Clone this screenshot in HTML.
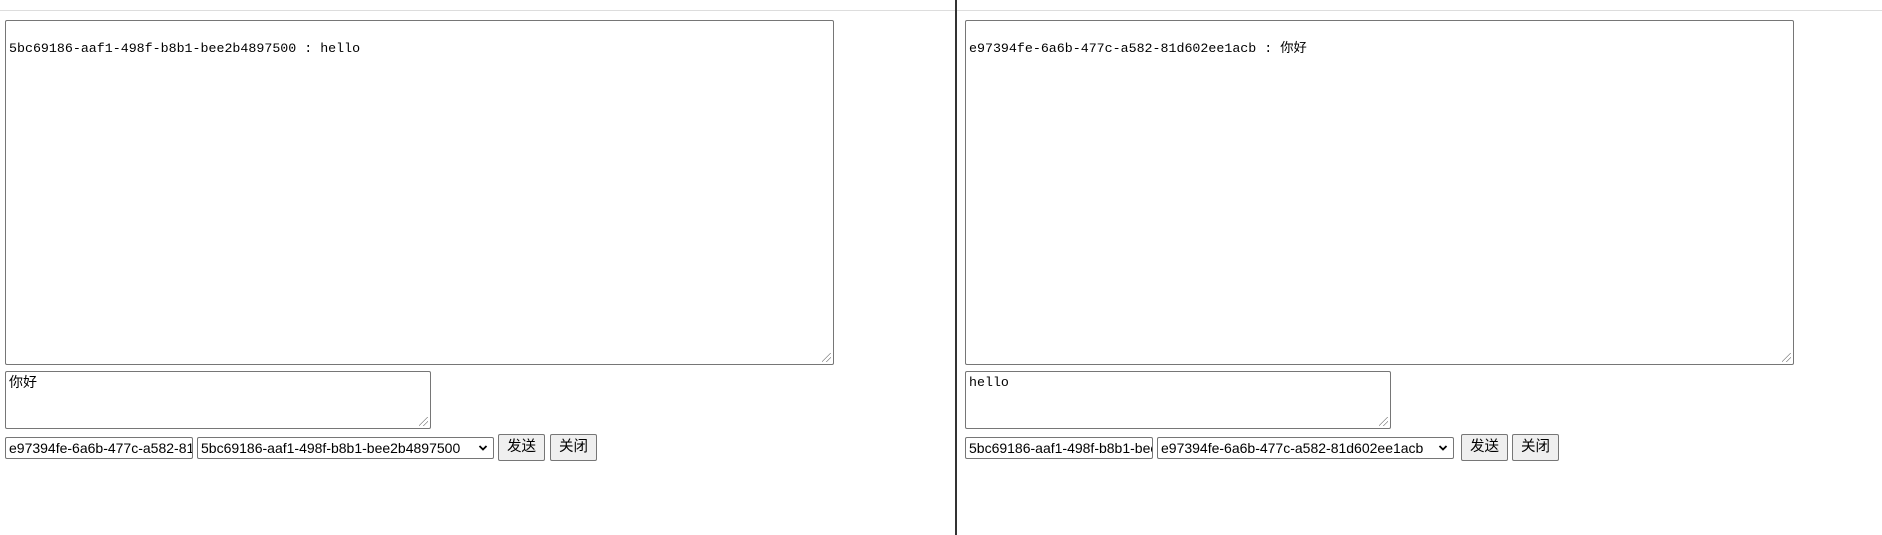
<!DOCTYPE html>
<html><head><meta charset="utf-8"><style>
html,body{margin:0;padding:0;background:#fff;width:1882px;height:535px;overflow:hidden;position:relative;font-family:"Liberation Sans","Noto Sans CJK SC",sans-serif}
.abs{position:absolute;box-sizing:border-box}
.hr{left:0;top:10px;width:1882px;height:1px;background:#ddd}
.div{left:955px;top:0;width:2px;height:535px;background:#333}
.ta{border:1px solid #767676;border-radius:2px;background:#fff;font-family:"Liberation Mono","Noto Sans CJK SC",monospace;font-size:13.3px;line-height:17px;padding:2px 3px;white-space:pre;color:#000}
.grip{position:absolute;right:2px;bottom:2px;width:9px;height:9px;background:linear-gradient(135deg,transparent 45%,#888 45%,#888 52%,transparent 52%,transparent 70%,#888 70%,#888 77%,transparent 77%)}
.in{border:1px solid #767676;border-radius:2px;font-size:14px;line-height:20px;padding:0 3px;white-space:nowrap;overflow:hidden;background:#fff}
.btn{border:1px solid #767676;border-radius:2px;background:#efefef;font-size:14.5px;text-align:center;line-height:25px}
.arrow{position:absolute;right:5px;top:6px;width:10px;height:8px}
</style></head><body>
<div class="abs hr"></div>
<div class="abs div"></div>

<div class="abs ta" style="left:5px;top:20px;width:829px;height:345px">
5bc69186-aaf1-498f-b8b1-bee2b4897500 : hello<div class="grip"></div></div>
<div class="abs ta" style="left:5px;top:371px;width:426px;height:58px;font-family:'Liberation Sans','Noto Sans CJK SC',sans-serif;font-size:14px">你好<div class="grip"></div></div>
<div class="abs in" style="left:5px;top:437px;width:188px;height:22px">e97394fe-6a6b-477c-a582-81d602ee1acb</div>
<div class="abs in" style="left:197px;top:437px;width:297px;height:22px;padding-right:18px">5bc69186-aaf1-498f-b8b1-bee2b4897500<svg class="arrow" viewBox="0 0 10 8"><path d="M1.5 2 L5 5.5 L8.5 2" fill="none" stroke="#000" stroke-width="1.8"/></svg></div>
<div class="abs btn" style="left:498px;top:434px;width:47px;height:27px">发送</div>
<div class="abs btn" style="left:550px;top:434px;width:47px;height:27px">关闭</div>

<div class="abs ta" style="left:965px;top:20px;width:829px;height:345px">
e97394fe-6a6b-477c-a582-81d602ee1acb : 你好<div class="grip"></div></div>
<div class="abs ta" style="left:965px;top:371px;width:426px;height:58px">hello<div class="grip"></div></div>
<div class="abs in" style="left:965px;top:437px;width:188px;height:22px">5bc69186-aaf1-498f-b8b1-bee2b4897500</div>
<div class="abs in" style="left:1157px;top:437px;width:297px;height:22px;padding-right:18px">e97394fe-6a6b-477c-a582-81d602ee1acb<svg class="arrow" viewBox="0 0 10 8"><path d="M1.5 2 L5 5.5 L8.5 2" fill="none" stroke="#000" stroke-width="1.8"/></svg></div>
<div class="abs btn" style="left:1461px;top:434px;width:47px;height:27px">发送</div>
<div class="abs btn" style="left:1512px;top:434px;width:47px;height:27px">关闭</div>
</body></html>
